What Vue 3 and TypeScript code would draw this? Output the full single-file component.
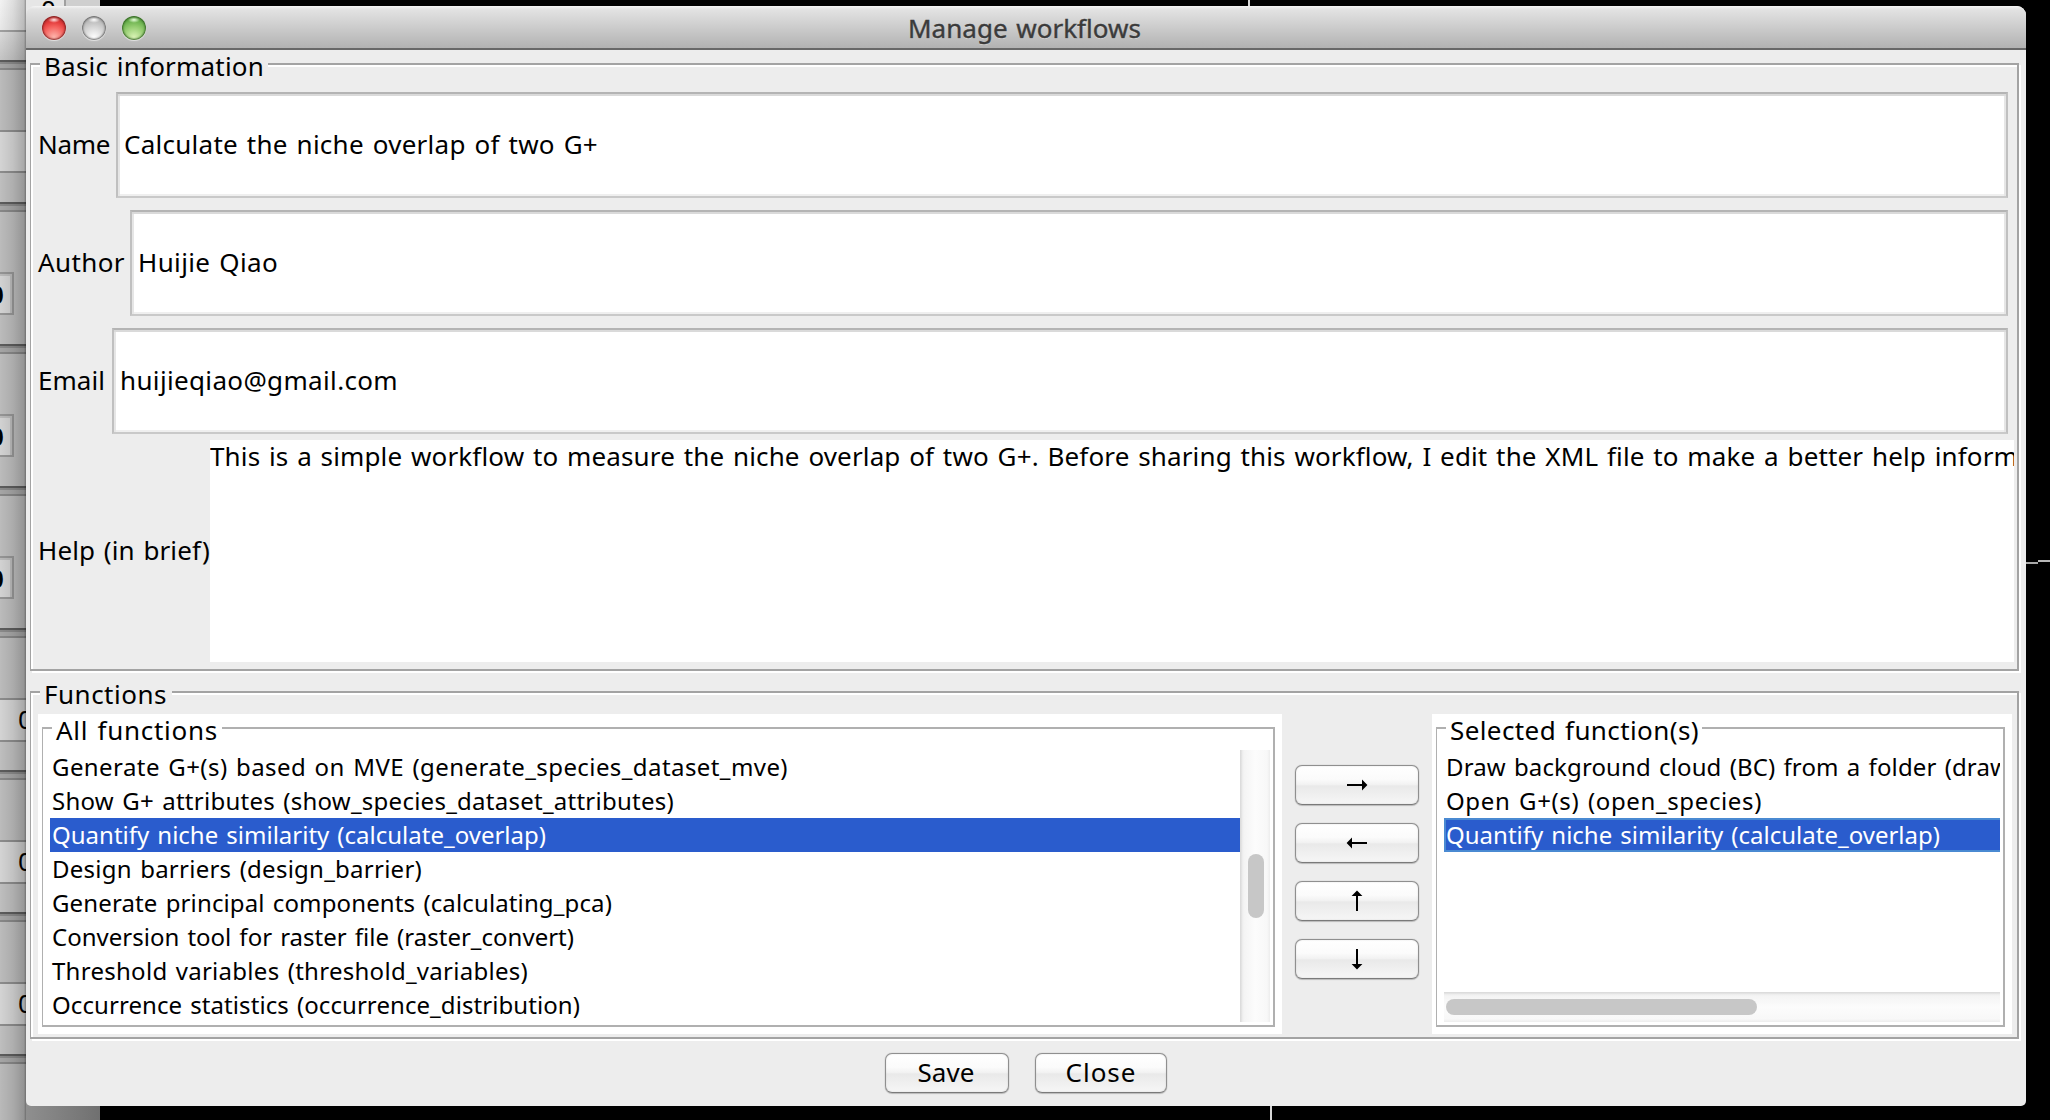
<script setup lang="ts">
import type { Directive } from 'vue'

interface Entry {
  text: string
  width: number
  selected?: boolean
}

// Tracks a text run so that it spans the given advance width in pixels.
const vFit: Directive<HTMLElement, number> = {
  mounted(el, binding) {
    const natural = el.getBoundingClientRect().width
    const count = (el.textContent ?? '').length
    if (count > 0) el.style.letterSpacing = `${(binding.value - natural) / count}px`
  },
}

const fields = [
  { key: 'name', label: 'Name', labelWidth: 72, value: 'Calculate the niche overlap of two G+', valueWidth: 474 },
  { key: 'author', label: 'Author', labelWidth: 87, value: 'Huijie Qiao', valueWidth: 140 },
  { key: 'email', label: 'Email', labelWidth: 67, value: 'huijieqiao@gmail.com', valueWidth: 278 },
]

const helpText =
  'This is a simple workflow to measure the niche overlap of two G+. Before sharing this workflow, I edit the XML file to make a better help inform'

const allFunctions: Entry[] = [
  { text: 'Generate G+(s) based on MVE (generate_species_dataset_mve)', width: 736 },
  { text: 'Show G+ attributes (show_species_dataset_attributes)', width: 622 },
  { text: 'Quantify niche similarity (calculate_overlap)', width: 494, selected: true },
  { text: 'Design barriers (design_barrier)', width: 370 },
  { text: 'Generate principal components (calculating_pca)', width: 560 },
  { text: 'Conversion tool for raster file (raster_convert)', width: 522 },
  { text: 'Threshold variables (threshold_variables)', width: 476 },
  { text: 'Occurrence statistics (occurrence_distribution)', width: 528 },
]

const selectedFunctions: Entry[] = [
  { text: 'Draw background cloud (BC) from a folder (draw', width: 563 },
  { text: 'Open G+(s) (open_species)', width: 316 },
  { text: 'Quantify niche similarity (calculate_overlap)', width: 494, selected: true },
]

const arrows = [
  { name: 'right', angle: 0 },
  { name: 'left', angle: 180 },
  { name: 'up', angle: -90 },
  { name: 'down', angle: 90 },
]

const upperCards = [0, 1, 2]
const lowerCards = [0, 1, 2]
</script>

<template>
  <div class="desktop">
    <div class="backdrop">
      <div class="strip">
        <div class="s-top"></div>
        <div class="s-head"></div>
        <div class="sep"></div>
        <div class="s-body first"></div>
        <div class="s-line"></div>
        <div class="s-light first"></div>
        <div class="s-line"></div>
        <div class="s-foot first"></div>
        <div class="sep"></div>
        <template v-for="n in upperCards" :key="'u' + n">
          <div class="s-card"><div class="s-field"><span>0</span></div></div>
          <div class="sep"></div>
        </template>
        <template v-for="n in lowerCards" :key="'l' + n">
          <div class="s-body"></div>
          <div class="s-line"></div>
          <div class="s-light value"><span>0</span></div>
          <div class="s-line"></div>
          <div class="s-foot"></div>
          <div class="sep"></div>
        </template>
      </div>
      <div class="behind"><div class="behind-top"><span>0</span></div></div>
    </div>
    <div class="axis top"></div>
    <div class="axis bottom"></div>
    <div class="axis right-a"></div>
    <div class="axis right-b"></div>

    <div class="window">
      <header class="titlebar">
        <div class="lights">
          <i class="light red"></i>
          <i class="light gray"></i>
          <i class="light green"></i>
        </div>
        <div class="title"><span v-fit="233">Manage workflows</span></div>
      </header>

      <section class="group basic">
        <div class="legend"><span v-fit="220">Basic information</span></div>
        <div v-for="f in fields" :key="f.key" class="row">
          <div class="label" :class="f.key"><span v-fit="f.labelWidth">{{ f.label }}</span></div>
          <div class="input"><span v-fit="f.valueWidth">{{ f.value }}</span></div>
        </div>
        <div class="row help">
          <div class="label help-label"><span v-fit="172">Help (in brief)</span></div>
          <div class="textarea"><span v-fit="1808">{{ helpText }}</span></div>
        </div>
      </section>

      <section class="group functions">
        <div class="legend"><span v-fit="123">Functions</span></div>
        <div class="panel all">
          <div class="frame">
            <div class="legend inner"><span v-fit="162">All functions</span></div>
            <div class="list">
              <div v-for="e in allFunctions" :key="e.text" class="item" :class="{ selected: e.selected }">
                <span v-fit="e.width">{{ e.text }}</span>
              </div>
            </div>
            <div class="vbar"><div class="vthumb"></div></div>
          </div>
        </div>
        <div class="arrows">
          <button v-for="a in arrows" :key="a.name" class="btn arrow" type="button" :aria-label="a.name">
            <svg width="20" height="20" viewBox="0 0 20 20" :class="a.name">
              <path d="M0 9h15V4.6L20.4 10 15 15.4V11H0z" :transform="`rotate(${a.angle} 10 10)`" />
            </svg>
          </button>
        </div>
        <div class="panel chosen">
          <div class="frame">
            <div class="legend inner"><span v-fit="249">Selected function(s)</span></div>
            <div class="list">
              <div v-for="e in selectedFunctions" :key="e.text" class="item" :class="{ selected: e.selected }">
                <span v-fit="e.width">{{ e.text }}</span>
              </div>
            </div>
            <div class="hbar"><div class="hthumb"></div></div>
          </div>
        </div>
      </section>

      <footer class="actions">
        <button class="btn save" type="button"><span v-fit="57">Save</span></button>
        <button class="btn close" type="button"><span v-fit="71">Close</span></button>
      </footer>
    </div>
  </div>
</template>

<style>
body {
  margin: 0;
  background: #000;
}
</style>

<style scoped>
* {
  box-sizing: border-box;
}
.desktop {
  position: relative;
  width: 2050px;
  height: 1120px;
  overflow: hidden;
  background: #000;
  color: #000;
  font: 26px/34px 'Noto Sans', 'Open Sans', sans-serif;
  word-spacing: 1.8px;
  white-space: nowrap;
}
span {
  display: inline-block;
}

/* window lying behind the dialog */
.backdrop {
  display: flex;
  width: 100px;
  height: 1120px;
  overflow: hidden;
}
.strip {
  position: relative;
  flex: none;
  width: 26px;
  height: 1120px;
  overflow: hidden;
  background: #bdbdbd;
}
.strip::after {
  content: '';
  position: absolute;
  inset: 0;
  background: linear-gradient(90deg, rgba(0, 0, 0, 0.02), rgba(0, 0, 0, 0.1) 50%, rgba(0, 0, 0, 0.22) 92%, rgba(0, 0, 0, 0.42));
}
.s-top { height: 30px; background: linear-gradient(#f8f8f8, #ececec); }
.s-head { height: 30px; border-top: 2px solid #a3a3a3; background: linear-gradient(#dedede, #c8c8c8); }
.sep {
  height: 10px;
  background: linear-gradient(#5e5e5e 0 2px, #8c8c8c 2px 4px, #a9a9a9 4px 8px, #8a8a8a 8px);
}
.s-body { height: 60px; background: #bfbfbf; }
.s-line { height: 2px; background: #8f8f8f; }
.s-light { height: 40px; background: #d8d8d8; }
.s-light.first { height: 39px; }
.s-foot { height: 28px; background: #c2c2c2; }
.s-foot.first { height: 29px; }
.s-card { height: 132px; padding-top: 60px; background: #bfbfbf; }
.s-field {
  width: 14px;
  height: 43px;
  border: 2px solid #979797;
  border-left: 0;
  background: #d6d6d6;
  box-shadow: inset -2px 2px #bcbcbc;
}
.s-field span { margin-left: -11px; line-height: 40px; font-weight: 600; }
.s-light.value span { margin-left: 18px; line-height: 39px; }
.behind { width: 74px; flex: none; display: flex; align-items: flex-start; background: linear-gradient(90deg, #8f8f8f, #707070); }
.behind-top {
  display: flex;
  align-items: flex-start;
  width: 74px;
  height: 24px;
  background: linear-gradient(90deg, #e6e6e6 38px, #a0a0a0 38px 40px, #cfcfcf 40px);
}
.behind-top span { margin: -8px 0 0 15px; }
.axis { position: absolute; background: #d8d8d8; }
.axis.top { left: 1248px; top: 0; width: 2px; height: 6px; }
.axis.bottom { left: 1270px; top: 1106px; width: 2px; height: 14px; }
.axis.right-a { left: 2026px; top: 562px; width: 12px; height: 2px; background: #a8a8a8; }
.axis.right-b { left: 2038px; top: 560px; width: 12px; height: 2px; background: #b8b8b8; }

/* dialog */
.window {
  position: absolute;
  left: 26px;
  top: 6px;
  width: 2000px;
  height: 1100px;
  overflow: hidden;
  border-radius: 9px 9px 5px 5px;
  background: #ededed;
}
.titlebar {
  position: relative;
  height: 44px;
  border-bottom: 2px solid #686868;
  background: linear-gradient(#f4f4f4, #e3e3e3 3px, #b2b2b2);
}
.lights { display: flex; gap: 16px; padding: 10px 0 0 16px; }
.light { width: 24px; height: 24px; border-radius: 50%; }
.light.red {
  background: radial-gradient(ellipse 6px 3px at 50% 16%, #ffe4e4, rgba(255, 200, 200, 0) 100%), radial-gradient(circle at 50% 90%, #ffb9b0, #f4605c 45%, #e23b3b 65%, #a32626);
  box-shadow: inset 0 0 2px 1px #7d2020, 0 1px 1px rgba(255, 255, 255, 0.6);
}
.light.gray {
  background: radial-gradient(ellipse 6px 3px at 50% 16%, #fff, rgba(255, 255, 255, 0) 100%), radial-gradient(circle at 50% 90%, #fff, #d4d4d4 45%, #b5b5b5 75%, #8a8a8a);
  box-shadow: inset 0 0 2px 1px #666, 0 1px 1px rgba(255, 255, 255, 0.6);
}
.light.green {
  background: radial-gradient(ellipse 6px 3px at 50% 16%, #eaffdf, rgba(220, 255, 200, 0) 100%), radial-gradient(circle at 50% 90%, #dcf5b8, #94cc70 45%, #69b04c 70%, #3c7a2c);
  box-shadow: inset 0 0 2px 1px #336324, 0 1px 1px rgba(255, 255, 255, 0.6);
}
.title {
  position: absolute;
  left: 882px;
  top: 5px;
  color: #3b3b3b;
  -webkit-text-stroke: 0.4px #3b3b3b;
  text-shadow: 0 1px rgba(255, 255, 255, 0.4);
}

.group {
  position: relative;
  width: 1989px;
  margin-left: 4px;
  border: 2px solid #a3a3a3;
  border-left-width: 1px;
  box-shadow: inset 2px 2px #fff, 2px 2px #fff;
}
.legend {
  position: absolute;
  left: 9px;
  top: -16px;
  width: 228px;
  padding-left: 4px;
  background: linear-gradient(transparent 6px, #ededed 6px);
}
.basic {
  display: flex;
  flex-direction: column;
  gap: 12px;
  height: 608px;
  margin-top: 13px;
  padding: 27px 3px 0 7px;
}
.row { display: flex; height: 106px; margin-right: 6px; }
.label { display: flex; align-items: center; flex: none; padding-bottom: 2px; }
.label.name { width: 78px; }
.label.author { width: 92px; }
.label.email { width: 74px; }
.help-label { width: 172px; }
.input {
  display: flex;
  align-items: center;
  flex: 1;
  padding: 0 0 2px 6px;
  border: 2px solid;
  border-color: #b4b4b4 #c0c0c0 #c9c9c9;
  background: #fff;
  box-shadow: inset 0 2px #dadada, inset 2px 0 #e6e6e6, inset -2px 0 #e6e6e6, inset 0 -2px #efefef;
}
.row.help { height: 222px; margin: -6px 0 0; }
.textarea { flex: 1; overflow: hidden; background: #fff; line-height: 32px; }

.functions {
  display: flex;
  height: 348px;
  margin-top: 20px;
  padding: 21px 0 0 7px;
}
.functions > .legend { width: 132px; }
.panel { flex: none; height: 320px; padding: 13px 7px 7px 4px; background: #fff; }
.all { width: 1244px; }
.chosen { width: 580px; }
.frame {
  position: relative;
  display: flex;
  height: 300px;
  padding: 21px 3px 3px 7px;
  border: 2px solid #b0b0b0;
  border-left-width: 1px;
}
.legend.inner { background: linear-gradient(transparent 6px, #fff 6px); }
.all .legend { width: 170px; }
.chosen .legend { width: 256px; }
.list { flex: 1; min-width: 0; overflow: hidden; font-size: 24px; }
.item { height: 34px; padding-left: 2px; }
.item.selected { background: #2a5ccd; color: #fff; }
.vbar {
  width: 30px;
  height: 272px;
  padding: 104px 0 0 8px;
  background: linear-gradient(90deg, #dcdcdc 0 1px, #ebebeb 2px, #f4f4f4 4px, #fcfcfc 50%, #f8f8f8 90%, #ededed);
}
.vthumb { width: 16px; height: 64px; border-radius: 8px; background: #c7c7c7; }
.chosen .frame { flex-direction: column; }
.chosen .selected {
  border: 2px solid #4a8ad2;
  border-right: 0;
  padding-left: 0;
  line-height: 30px;
}
.hbar {
  height: 30px;
  padding: 7px 0 0 2px;
  background: linear-gradient(#dcdcdc 0 1px, #ebebeb 2px, #f4f4f4 4px, #fcfcfc 50%, #f8f8f8 90%, #ededed);
}
.hthumb { width: 311px; height: 16px; border-radius: 8px; background: #c7c7c7; }

.arrows {
  display: flex;
  flex-direction: column;
  align-items: center;
  gap: 18px;
  width: 150px;
  padding-top: 51px;
}
.btn {
  height: 40px;
  margin: 0;
  padding: 0;
  border: 1px solid #8f8f8f;
  border-bottom-color: #7a7a7a;
  border-radius: 7px;
  background: linear-gradient(#fff, #fbfbfb 35%, #f1f1f1 50%, #e9e9e9 52%, #f6f6f6);
  box-shadow: 0 0 1px #999, 0 1px 1px rgba(0, 0, 0, 0.2), inset 0 0 2px rgba(0, 0, 0, 0.12);
  color: #000;
  font: inherit;
}
.arrow { display: flex; align-items: center; justify-content: center; width: 124px; }
.arrow svg { overflow: visible; }
.actions { display: flex; gap: 26px; margin-top: 14px; padding-left: 859px; }
.save { width: 124px; }
.close { width: 132px; }
.actions span { display: block; width: max-content; margin: 0 auto; padding-bottom: 2px; line-height: 34px; }
.save span { position: relative; left: -1px; }
</style>
